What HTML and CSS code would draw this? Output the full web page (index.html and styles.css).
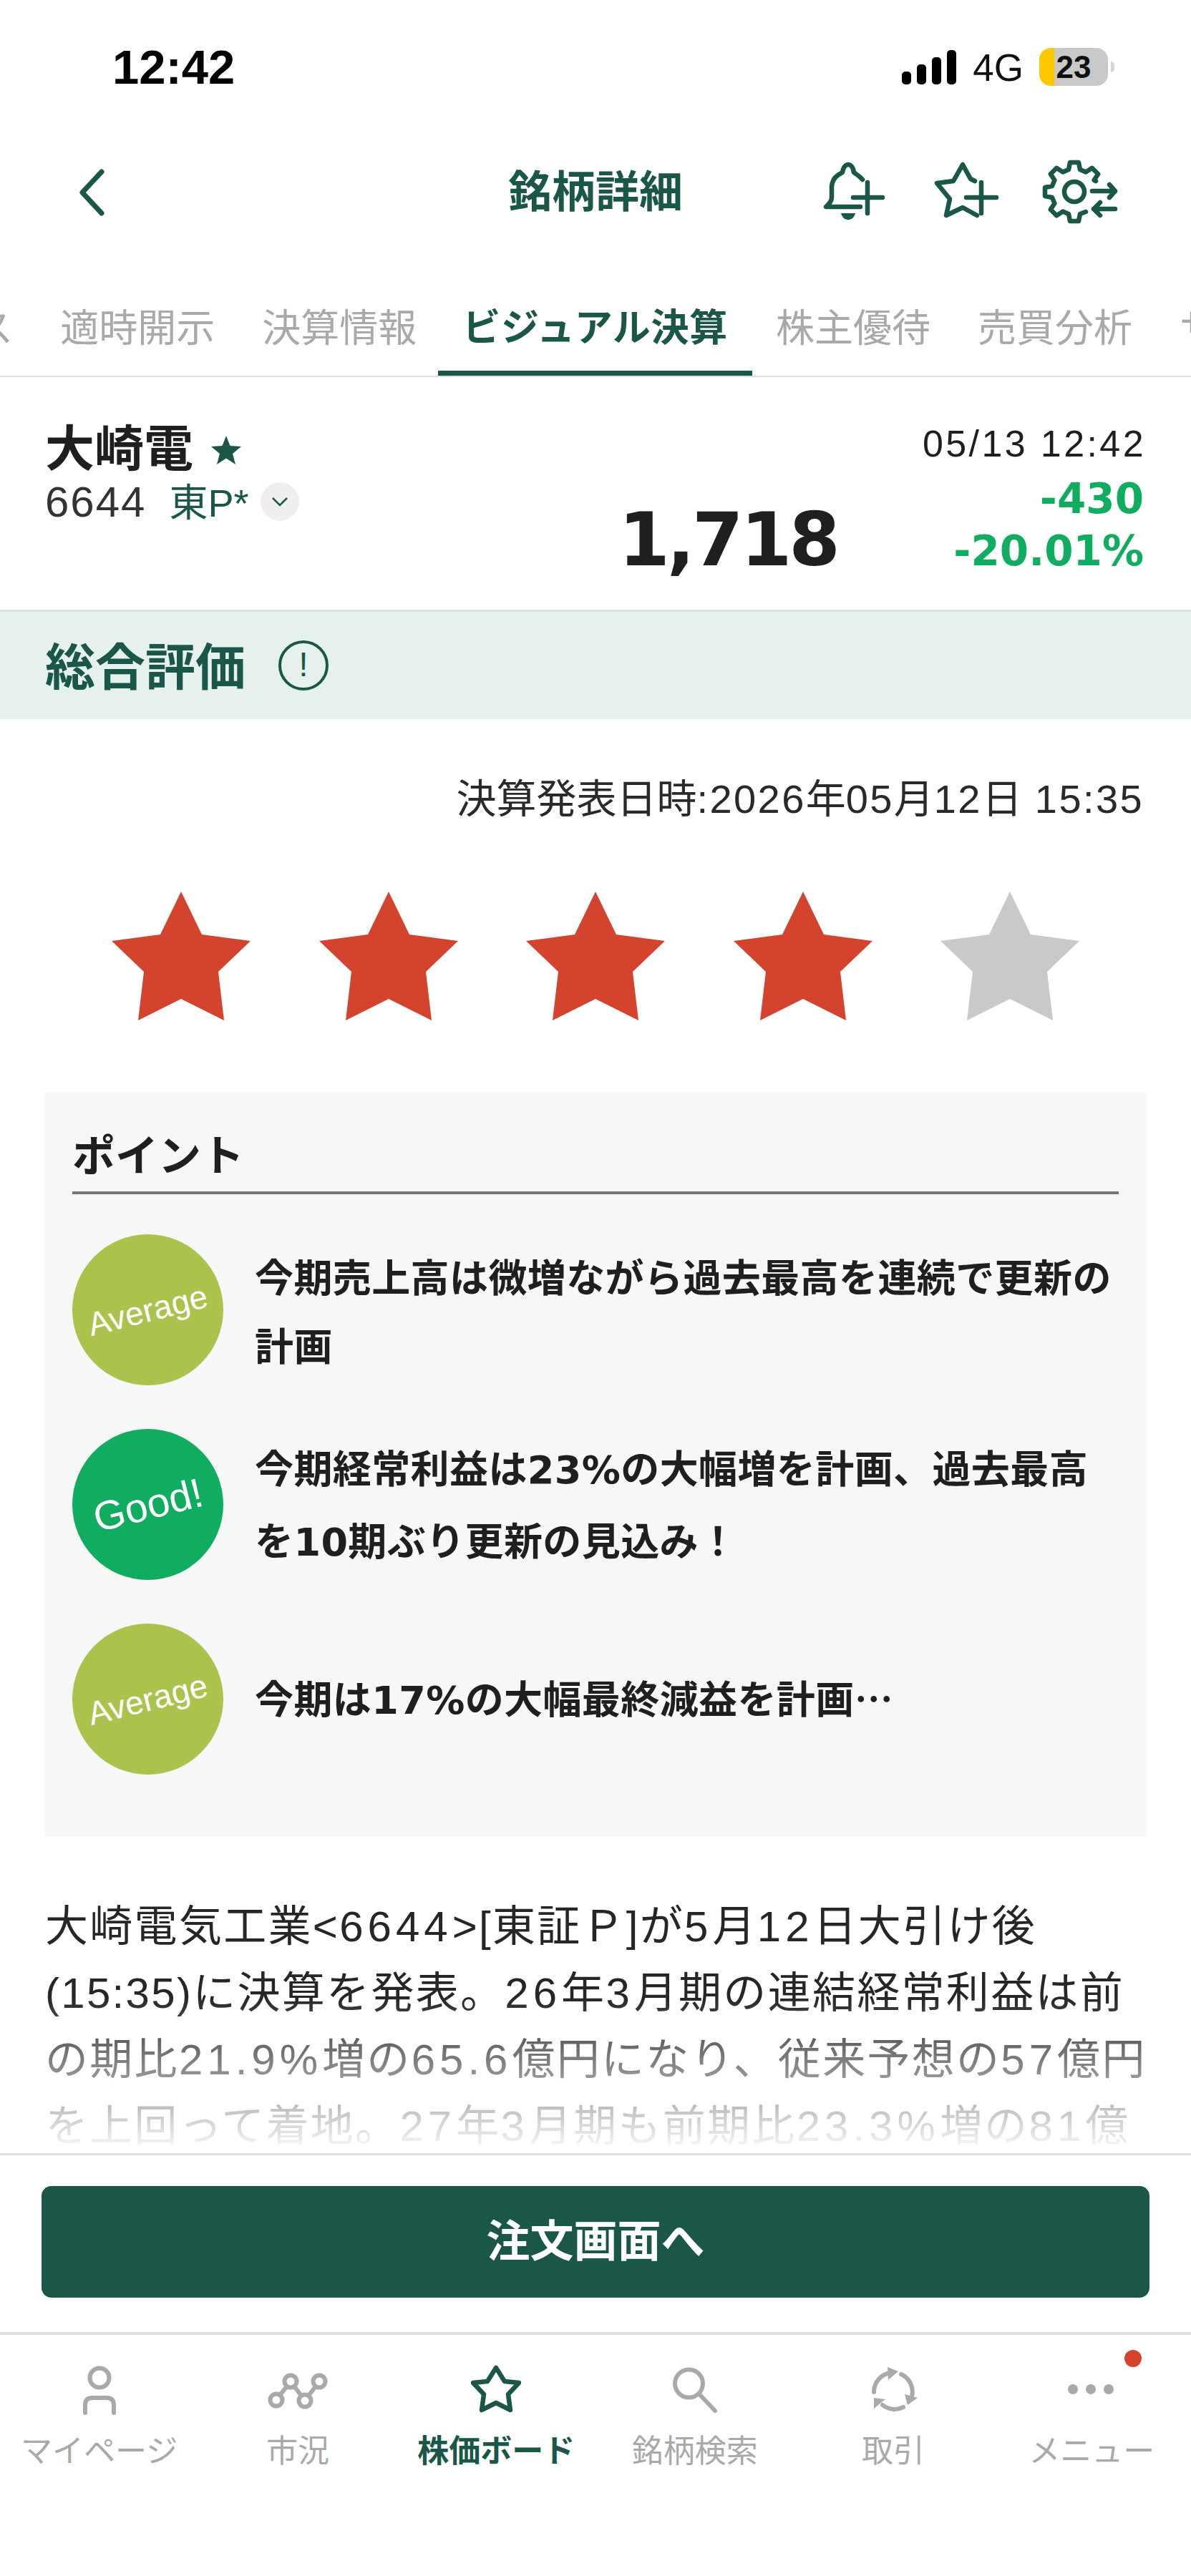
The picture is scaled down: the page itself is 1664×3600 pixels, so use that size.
FILE: index.html
```html
<!DOCTYPE html>
<html lang="ja">
<head>
  <meta charset="UTF-8">
  <meta name="viewport" content="width=device-width, initial-scale=1.0">
  <title>銘柄詳細</title>
  <link rel="stylesheet" href="styles.css">
</head>
<body>
  <div class="app">

    <div class="status-bar">
      <div class="status-time">12:42</div>
      <div class="status-right">
        <div class="signal">
          <span class="bar bar-1"></span>
          <span class="bar bar-2"></span>
          <span class="bar bar-3"></span>
          <span class="bar bar-4"></span>
        </div>
        <div class="network">4G</div>
        <div class="battery">
          <div class="battery-body"><span class="battery-level">23</span></div>
          <div class="battery-tip"></div>
        </div>
      </div>
    </div>

    <div class="nav-bar">
      <svg class="nav-back" viewBox="0 0 40 68"><path d="M34 5 L7 34 L34 63"/></svg>
      <div class="nav-title">銘柄詳細</div>
      <div class="nav-icons">
        <!-- bell + -->
        <svg class="nav-icon" viewBox="-3 -3 90 86">
          <path d="M53 23 C49 18 45 16 41 13 C40 5 36 2 33 2 C30 2 26 5 25 13 C16 17 10 24 10 34 L10 48 C10 54 6 57 2 61 L50 61"/>
          <path class="nav-icon-fill" d="M23 70 L43 70 C41 77 37 79 33 79 C29 79 25 77 23 70 Z"/>
          <path d="M40 48 L81 48 M60 27 L60 70"/>
        </svg>
        <!-- star + -->
        <svg class="nav-icon nav-icon-star" viewBox="-3 -3 94 86">
          <path d="M55 25 L49 22 L38 2 L25 25 L2 28 L20 50 L15 73 L38 62 L58 73"/>
          <path d="M43 48 L85 48 M64 27 L64 70"/>
        </svg>
        <!-- gear with arrows -->
        <svg class="nav-icon nav-icon-gear" viewBox="-2 -2 106 90">
          <path d="M73 28 L70.600 26.800 L76.200 18.200 L67.800 9.800 L59.200 15.400 L51 12 L49 2 L37 2 L35 12 L26.800 15.400 L18.200 9.800 L9.800 18.200 L15.400 26.800 L12 35 L2 37 L2 49 L12 51 L15.400 59.200 L9.800 67.800 L18.200 76.200 L26.800 70.600 L35 74 L37 84 L49 84 L51 74 L59 71"/>
          <circle cx="43" cy="43" r="14"/>
          <path d="M68 42 L100 42 M92 33 L100 42 L92 51"/>
          <path d="M100 67 L70 67 M79 58 L70 67 L79 76"/>
        </svg>
      </div>
    </div>

    <div class="tabs">
      <div class="tab tab-cut">ニュース</div>
      <div class="tab">適時開示</div>
      <div class="tab">決算情報</div>
      <div class="tab active">ビジュアル決算</div>
      <div class="tab">株主優待</div>
      <div class="tab">売買分析</div>
      <div class="tab">サマリー</div>
    </div>

    <div class="stock-head">
      <div class="stock-left">
        <div class="stock-name">
          <span>大崎電</span>
          <svg class="stock-star" viewBox="0 0 44 42"><polygon points="22,1 27.5,15 43,16 31,26 35,41 22,32.500 9,41 13,26 1,16 16.500,15"/></svg>
        </div>
        <div class="stock-code">
          <span>6644</span>
          <span class="stock-market">東P*</span>
          <span class="market-toggle">
            <svg viewBox="0 0 24 14"><path d="M2 2 L12 12 L22 2"/></svg>
          </span>
        </div>
      </div>
      <div class="stock-price">1,718</div>
      <div class="stock-right">
        <div class="stock-time">05/13 12:42</div>
        <div class="stock-change">-430</div>
        <div class="stock-change">-20.01%</div>
      </div>
    </div>

    <div class="section-band">
      <span class="section-title">総合評価</span>
      <span class="section-info">!</span>
    </div>

    <div class="announce-date">決算発表日時<span class="num">:2026</span>年<span class="num">05</span>月<span class="num">12</span>日<span class="num"> 15:35</span></div>

    <div class="rating">
      <svg class="rating-star" viewBox="0 0 194 180"><polygon points="97,0 126,60 194,69 149,112 157,180 97,150 37,180 45,112 0,69 68,60"/></svg>
      <svg class="rating-star" viewBox="0 0 194 180"><polygon points="97,0 126,60 194,69 149,112 157,180 97,150 37,180 45,112 0,69 68,60"/></svg>
      <svg class="rating-star" viewBox="0 0 194 180"><polygon points="97,0 126,60 194,69 149,112 157,180 97,150 37,180 45,112 0,69 68,60"/></svg>
      <svg class="rating-star" viewBox="0 0 194 180"><polygon points="97,0 126,60 194,69 149,112 157,180 97,150 37,180 45,112 0,69 68,60"/></svg>
      <svg class="rating-star off" viewBox="0 0 194 180"><polygon points="97,0 126,60 194,69 149,112 157,180 97,150 37,180 45,112 0,69 68,60"/></svg>
    </div>

    <div class="point-card">
      <div class="point-title">ポイント</div>
      <div class="point-list">
        <div class="point-row">
          <div class="badge average"><span>Average</span></div>
          <div class="point-text">今期売上高は微増ながら過去最高を連続で更新の計画</div>
        </div>
        <div class="point-row">
          <div class="badge good"><span>Good!</span></div>
          <div class="point-text">今期経常利益は<span class="num">23%</span>の大幅増を計画、過去最高<br>を<span class="num">10</span>期ぶり更新の見込み！</div>
        </div>
        <div class="point-row">
          <div class="badge average"><span>Average</span></div>
          <div class="point-text">今期は<span class="num">17%</span>の大幅最終減益を計画…</div>
        </div>
      </div>
    </div>

    <div class="summary">大崎電気工業&lt;<span class="num">6644</span>&gt;[東証Ｐ]が<span class="num">5</span>月<span class="num">12</span>日大引け後<br>(15:35)に決算を発表。<span class="num">26</span>年<span class="num">3</span>月期の連結経常利益は前<br>の期比<span class="num">21.9%</span>増の<span class="num">65.6</span>億円になり、従来予想の<span class="num">57</span>億円<br>を上回って着地。<span class="num">27</span>年<span class="num">3</span>月期も前期比<span class="num">23.3%</span>増の<span class="num">81</span>億<br>円に伸びを見込む。</div>

    <div class="order-bar">
      <div class="order-button">注文画面へ</div>
    </div>

    <div class="tab-bar">
      <div class="tab-item">
        <svg class="tab-icon" viewBox="0 0 70 70"><circle cx="35" cy="18" r="13.500"/><path d="M15 67 L15 56 Q15 46 25 46 L45 46 Q55 46 55 56 L55 67"/></svg>
        <span>マイページ</span>
      </div>
      <div class="tab-item">
        <svg class="tab-icon tab-icon-wide" viewBox="0 0 90 70"><circle cx="15" cy="49" r="8.500"/><circle cx="35" cy="23" r="8.500"/><circle cx="55" cy="50" r="8.500"/><circle cx="75" cy="23" r="8.500"/><path d="M20 42 L30 30 M40 30 L50 43 M60 43 L70 30"/></svg>
        <span>市況</span>
      </div>
      <div class="tab-item active">
        <svg class="tab-icon" viewBox="0 0 70 70"><polygon points="35,4 47,23 67,25 52,41 55,63 35,53 15,63 18,41 3,25 23,23"/></svg>
        <span>株価ボード</span>
      </div>
      <div class="tab-item">
        <svg class="tab-icon" viewBox="0 0 70 70"><circle cx="26.500" cy="26" r="19.500"/><path d="M43 43 L63 64"/></svg>
        <span>銘柄検索</span>
      </div>
      <div class="tab-item">
        <svg class="tab-icon" viewBox="0 0 70 70">
          <path d="M8 38 A27 27 0 0 1 31 11"/>
          <path d="M46 13 A27 27 0 0 1 61 44"/>
          <path d="M49 59 A27 27 0 0 1 20 56"/>
          <path class="tab-icon-fill" d="M27 3 L42 9 L28 21 Z M51 41 L69 46 L55 56 Z M8 46 L24 48 L8 61 Z"/>
        </svg>
        <span>取引</span>
      </div>
      <div class="tab-item">
        <svg class="tab-icon tab-icon-dots" viewBox="0 0 70 70"><circle cx="9" cy="34" r="7"/><circle cx="34" cy="34" r="7"/><circle cx="59" cy="34" r="7"/></svg>
        <span>メニュー</span>
        <span class="notify-dot"></span>
      </div>
    </div>

  </div>
</body>
</html>
```

FILE: styles.css
```css
* {
  margin: 0;
  padding: 0;
  box-sizing: border-box;
}

html, body {
  height: 100%;
  background-color: #fff;
  overflow: hidden;
}

body {
  font-family: 'Liberation Sans', 'Noto Sans CJK JP', sans-serif;
  color: #1f1f1f;
}

.app {
  width: 1664px;
  height: 3600px;
  overflow: hidden;
  display: flex;
  flex-direction: column;
}

/* status bar */
.status-bar {
  height: 190px;
  flex: none;
  display: flex;
  justify-content: space-between;
  padding: 56px 107px 0 157px;
}

.status-time {
  font-size: 67px;
  font-weight: 700;
  line-height: 76px;
  color: #000;
}

.status-right {
  display: flex;
  align-items: flex-start;
  padding-top: 11px;
}

.signal {
  display: flex;
  align-items: flex-end;
  gap: 8px;
  height: 48px;
  margin-top: 3px;
}

.bar {
  width: 13px;
  background-color: #000;
  border-radius: 5px;
}

.bar-1 { height: 18px; }
.bar-2 { height: 28px; }
.bar-3 { height: 38px; }
.bar-4 { height: 48px; }

.network {
  margin-left: 23px;
  font-size: 53px;
  line-height: 56px;
  color: #111;
}

.battery {
  margin-left: 22px;
  display: flex;
  align-items: center;
}

.battery-body {
  width: 96px;
  height: 53px;
  border-radius: 16px;
  background: linear-gradient(to right, #fcc900 21px, #c9c9c9 21px);
  text-align: center;
  font-size: 44px;
  font-weight: 700;
  line-height: 53px;
  color: #111;
}

.battery-tip {
  width: 5px;
  height: 15px;
  margin-left: 4px;
  border-radius: 0 8px 8px 0;
  background-color: #d6d6d6;
}

/* nav */
.nav-bar {
  height: 158px;
  flex: none;
  display: grid;
  grid-template-columns: 1fr auto 1fr;
  align-items: center;
}

.nav-back {
  margin-left: 108px;
  width: 40px;
  height: 68px;
}

.nav-back path {
  fill: none;
  stroke: #1b5748;
  stroke-width: 7;
  stroke-linecap: round;
  stroke-linejoin: round;
}

.nav-title {
  font-size: 61px;
  font-weight: 700;
  line-height: 80px;
  color: #1b5748;
}

.nav-icons {
  justify-self: end;
  margin-right: 102px;
  display: flex;
  align-items: flex-start;
  gap: 65px;
}

.nav-icon {
  width: 90px;
  height: 86px;
}

.nav-icon-star {
  width: 94px;
}

.nav-icon-gear {
  width: 106px;
  height: 90px;
  margin-left: -7px;
  margin-top: -2px;
}

.nav-icon path, .nav-icon circle {
  fill: none;
  stroke: #1b5748;
  stroke-width: 6.500;
  stroke-linecap: round;
  stroke-linejoin: round;
}

.nav-icon .nav-icon-fill {
  fill: #1b5748;
  stroke: none;
}

/* scrolling tabs */
.tabs {
  height: 179px;
  flex: none;
  display: flex;
  align-items: flex-end;
  overflow: hidden;
  white-space: nowrap;
  border-bottom: 2px solid #dedede;
}

.tab {
  flex: none;
  height: 100px;
  padding: 0 33px;
  font-size: 54px;
  line-height: 68px;
  color: #a9a9a9;
}

.tab-cut {
  margin-left: -228px;
}

.tab.active {
  margin-left: -3px;
  padding: 0 34px;
  font-size: 53px;
  font-weight: 700;
  letter-spacing: 0.700px;
  color: #1b5748;
  border-bottom: 7px solid #1b5748;
}

/* stock header */
.stock-head {
  height: 328px;
  flex: none;
  padding: 0 66px 0 63px;
  display: flex;
  border-bottom: 3px solid #dce4e2;
}

.stock-left {
  flex: 1;
  padding-top: 62px;
}

.stock-name {
  display: flex;
  align-items: center;
  font-size: 69px;
  font-weight: 700;
  line-height: 80px;
}

.stock-star {
  width: 44px;
  height: 42px;
  margin-left: 24px;
  fill: #1b5748;
}

.stock-code {
  display: flex;
  align-items: center;
  height: 66px;
  margin-top: -1px;
  font-size: 60px;
  letter-spacing: 2px;
  color: #333;
}

.stock-market {
  margin-left: 32px;
  margin-top: -6px;
  font-size: 54px;
  letter-spacing: 0;
  color: #1b5748;
}

.market-toggle {
  width: 54px;
  height: 54px;
  margin-left: 16px;
  border-radius: 50%;
  background-color: #efefef;
  display: flex;
  align-items: center;
  justify-content: center;
}

.market-toggle svg {
  width: 24px;
  height: 14px;
  fill: none;
  stroke: #1b5748;
  stroke-width: 2.500;
}

.stock-price {
  align-self: flex-end;
  margin-right: 108px;
  margin-bottom: 36px;
  font-family: 'DejaVu Sans', sans-serif;
  font-size: 103px;
  font-weight: 700;
  line-height: 124px;
  letter-spacing: -4px;
}

.stock-right {
  width: 320px;
  flex: none;
  padding-top: 63px;
  text-align: right;
}

.stock-time {
  font-size: 52px;
  line-height: 60px;
  letter-spacing: 3.400px;
  margin-right: -3px;
}

.stock-change {
  font-family: 'DejaVu Sans', sans-serif;
  font-size: 58px;
  font-weight: 700;
  line-height: 73px;
  color: #10ad60;
}

.stock-time + .stock-change {
  margin-top: 11px;
}

/* section band */
.section-band {
  height: 150px;
  flex: none;
  padding-left: 63px;
  display: flex;
  align-items: center;
  background-color: #e6f0ed;
}

.section-title {
  margin-top: -5px;
  font-size: 70px;
  font-weight: 700;
  color: #1b5748;
}

.section-info {
  width: 70px;
  height: 70px;
  margin-left: 46px;
  border: 4px solid #1b5748;
  border-radius: 50%;
  text-align: center;
  font-size: 48px;
  line-height: 60px;
  color: #1b5748;
}

.announce-date {
  flex: none;
  margin-top: 76px;
  padding-right: 66px;
  text-align: right;
  font-size: 56px;
  line-height: 72px;
  color: #2a2a2a;
}

.announce-date .num {
  letter-spacing: 2.400px;
}

.rating {
  flex: none;
  margin-top: 93px;
  display: flex;
  gap: 95.500px;
  padding-left: 156px;
}

.rating-star {
  width: 194px;
  height: 180px;
  fill: #d3432e;
}

.rating-star.off {
  fill: #c9c9c9;
}

/* point card */
.point-card {
  flex: none;
  margin: 101px 62px 0;
  height: 1039px;
  padding: 53px 39px 0;
  background-color: #f6f8f8;
}

.point-title {
  padding-bottom: 11px;
  border-bottom: 4px solid #777;
  font-size: 60px;
  font-weight: 700;
  line-height: 74px;
}

.point-list {
  margin-top: 56px;
  display: flex;
  flex-direction: column;
  gap: 61px;
}

.point-row {
  display: flex;
  align-items: center;
  gap: 44px;
}

.badge {
  width: 211px;
  height: 211px;
  flex: none;
  border-radius: 50%;
  display: flex;
  align-items: center;
  justify-content: center;
  color: #fff;
}

.badge span {
  transform: rotate(-14deg);
}

.badge.average {
  background-color: #abc34d;
  font-size: 46px;
}

.badge.good {
  background-color: #10ad60;
  font-size: 57px;
}

.point-text {
  font-family: 'Noto Sans CJK JP', sans-serif;
  font-size: 54px;
  font-weight: 700;
  line-height: 96px;
  letter-spacing: 0.400px;
}

.point-text .num {
  font-family: 'DejaVu Sans', sans-serif;
}

.summary {
  flex: none;
  height: 363px;
  margin-top: 80px;
  padding: 0 63px;
  font-size: 60px;
  line-height: 93px;
  letter-spacing: 2.300px;
  white-space: nowrap;
  color: #262626;
  overflow: hidden;
  -webkit-mask-image: linear-gradient(to bottom, #000 40%, transparent 100%);
  mask-image: linear-gradient(to bottom, #000 40%, transparent 100%);
}

.summary .num {
  letter-spacing: 6px;
}

/* order button */
.order-bar {
  height: 250px;
  flex: none;
  padding: 43px 58px 0;
  border-top: 3px solid #dedede;
}

.order-button {
  height: 156px;
  border-radius: 14px;
  background-color: #1b5748;
  text-align: center;
  font-size: 61px;
  font-weight: 700;
  line-height: 156px;
  color: #fff;
}

/* bottom tabs */
.tab-bar {
  flex: none;
  display: grid;
  grid-template-columns: repeat(6, 1fr);
  border-top: 4px solid #dedede;
}

.tab-item {
  position: relative;
  padding-top: 42px;
  display: flex;
  flex-direction: column;
  align-items: center;
  font-size: 44px;
  line-height: 60px;
  color: #a9a9a9;
}

.tab-item.active {
  font-weight: 700;
  color: #1b5748;
}

.tab-icon {
  width: 70px;
  height: 70px;
  margin-bottom: 21px;
  fill: none;
  stroke: #a9a9a9;
  stroke-width: 6;
  stroke-linecap: round;
  stroke-linejoin: round;
}

.tab-icon-wide {
  width: 90px;
}

.tab-item.active .tab-icon {
  stroke: #1b5748;
  stroke-width: 6.500;
}

.tab-icon-fill {
  fill: #a9a9a9;
  stroke: none;
}

.tab-icon-dots {
  fill: #a9a9a9;
  stroke: none;
}

.notify-dot {
  position: absolute;
  left: 184px;
  top: 21px;
  width: 24px;
  height: 24px;
  border-radius: 50%;
  background-color: #d3432e;
}
```
